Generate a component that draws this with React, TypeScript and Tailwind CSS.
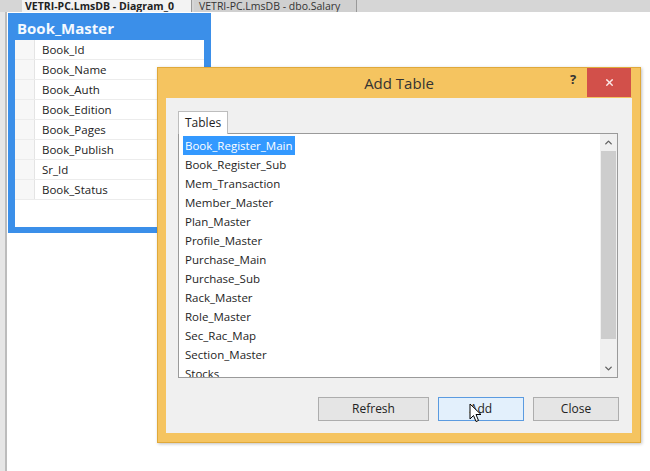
import { ChevronUp, ChevronDown, X } from "lucide-react";

const columns = [
  "Book_Id",
  "Book_Name",
  "Book_Auth",
  "Book_Edition",
  "Book_Pages",
  "Book_Publish",
  "Sr_Id",
  "Book_Status",
];

const tables = [
  "Book_Register_Main",
  "Book_Register_Sub",
  "Mem_Transaction",
  "Member_Master",
  "Plan_Master",
  "Profile_Master",
  "Purchase_Main",
  "Purchase_Sub",
  "Rack_Master",
  "Role_Master",
  "Sec_Rac_Map",
  "Section_Master",
  "Stocks",
];

function Cursor() {
  return (
    <svg width="14" height="20" viewBox="0 0 14 20" className="absolute left-[30px] top-[5px]">
      <path d="M1 1 L1 16 L4.5 12.5 L7 18.5 L9.5 17.5 L7 11.5 L12 11.5 Z" fill="#fff" stroke="#000" strokeWidth="1" strokeLinejoin="round" />
    </svg>
  );
}

export default function App() {
  return (
    <div
      className="relative h-[471px] w-[650px] overflow-hidden bg-white text-[11.5px] text-[#1e1e1e]"
      style={{ fontFamily: '"Open Sans", "Noto Sans", sans-serif' }}
    >
      {/* document tabs */}
      <div className="flex h-[12px] items-end bg-[#d6d6d6] pl-[22px]">
        <div className="flex h-[12px] w-[170px] items-center overflow-hidden border-r border-[#999] bg-[#f3f3f3] pl-[3px] text-[10.5px] font-bold leading-[12px] text-[#222]">
          VETRI-PC.LmsDB - Diagram_0
        </div>
        <div className="ml-[2px] flex h-[12px] w-[163px] items-center overflow-hidden border-r border-[#999] bg-[#d0d0d0] pl-[5px] text-[10.5px] leading-[12px] text-[#333]">
          VETRI-PC.LmsDB - dbo.Salary
        </div>
      </div>

      <div className="flex h-[459px]">
        <div className="w-[7px] border-r-2 border-[#bcbcbc] bg-[#e6e6e6]" />
        <div className="relative flex-1 bg-white">
          {/* Book_Master node */}
          <div className="absolute left-[1px] top-[1px] w-[203px] bg-[#3b8fe9] px-[7px] pb-[6px]">
            <div className="h-[27px] pl-[2px] pt-[5px] text-[15px] font-bold leading-[20px] text-[#f4f9ff]">Book_Master</div>
            <div className="h-[187px] bg-white">
              {columns.map((c) => (
                <div key={c} className="flex h-[20px] border-b border-[#ececec]">
                  <div className="w-[20px] border-r border-[#e4e4e4] bg-[#f7f7f7]" />
                  <div className="pl-[7px] leading-[20px] text-[#222]">{c}</div>
                </div>
              ))}
            </div>
          </div>
        </div>
      </div>

      {/* Add Table dialog */}
      <div className="absolute left-[157px] top-[67px] flex h-[376px] w-[484px] flex-col border border-[#e0a93a] bg-[#f5c460] shadow-[1px_1px_3px_rgba(0,0,0,0.25)]">
        <div className="relative flex h-[30px] items-center justify-center">
          <span className="text-[15px] text-[#333]">Add Table</span>
          <span className="absolute left-[412px] top-[2px] text-[13px] font-bold text-[#333]">?</span>
          <div className="absolute right-[9px] top-0 flex h-[29px] w-[44px] items-center justify-center bg-[#d2504a]">
            <X size={11} strokeWidth={3} color="#fbe9e8" />
          </div>
        </div>
        <div className="mx-[8px] mb-[9px] flex flex-1 flex-col bg-[#f0f0f0] px-[12px] pt-[13px]">
          <div className="flex">
            <div className="relative z-10 -mb-px h-[23px] w-[50px] border border-b-0 border-[#bdbdbd] bg-white pl-[6px] text-[12px] leading-[22px]">
              Tables
            </div>
          </div>
          <div className="flex h-[245px] w-[440px] border border-[#9a9a9a] bg-white">
            <div className="flex-1 overflow-hidden pl-[4px] pt-[2px]">
              {tables.map((t, i) => (
                <div key={t} className="h-[19px] leading-[19px]">
                  <span
                    className={
                      i === 0
                        ? "inline-block bg-[#3399ff] px-[2px] text-white"
                        : "inline-block px-[2px]"
                    }
                  >
                    {t}
                  </span>
                </div>
              ))}
            </div>
            <div className="flex w-[17px] flex-col items-center bg-[#f0f0f0]">
              <div className="flex h-[17px] items-center justify-center">
                <ChevronUp size={11} strokeWidth={3} color="#606060" />
              </div>
              <div className="h-[188px] w-[15px] bg-[#cdcdcd]" />
              <div className="flex-1" />
              <div className="flex h-[17px] items-center justify-center">
                <ChevronDown size={11} strokeWidth={3} color="#606060" />
              </div>
            </div>
          </div>
          <div className="mt-[19px] flex justify-end gap-[9px] pr-[1px]">
            <button className="h-[24px] w-[111px] border border-[#adadad] bg-[#e5e5e5] text-[12px] text-[#222]">Refresh</button>
            <button className="relative h-[24px] w-[86px] border border-[#5b9be0] bg-[#e3f0fc] text-[12px] text-[#222]">
              Add
              <Cursor />
            </button>
            <button className="h-[24px] w-[86px] border border-[#adadad] bg-[#e5e5e5] text-[12px] text-[#222]">Close</button>
          </div>
        </div>
      </div>
    </div>
  );
}
